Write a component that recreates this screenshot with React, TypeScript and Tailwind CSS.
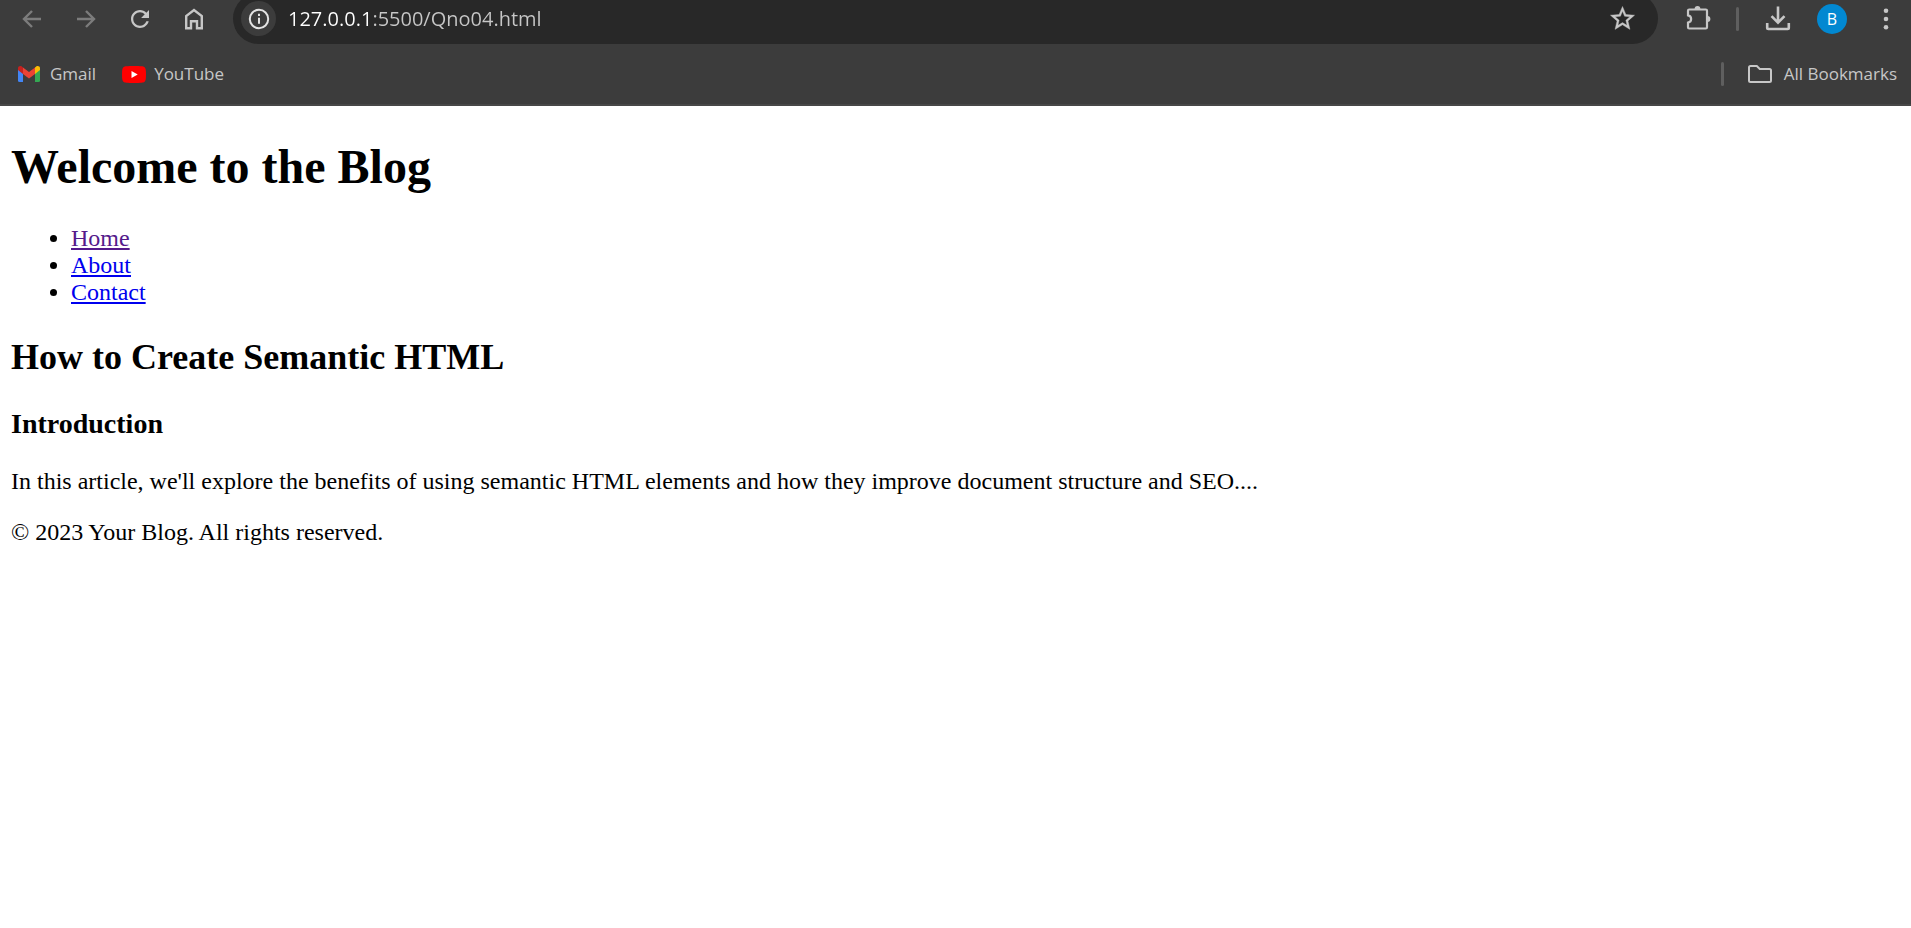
import type { ReactNode } from "react";

function ToolButton({ label, dim, children }: { label: string; dim?: boolean; children: ReactNode }) {
  return (
    <button
      type="button"
      aria-label={label}
      className={
        dim
          ? "flex h-full w-[54px] items-center justify-center text-[#7c7c7c]"
          : "flex h-full w-[54px] items-center justify-center text-[#c7c7c7]"
      }
    >
      <svg
        viewBox="0 0 30 30"
        className="size-[30px]"
        fill="none"
        stroke="currentColor"
        strokeWidth="2.4"
        aria-hidden="true"
      >
        {children}
      </svg>
    </button>
  );
}

function GmailIcon() {
  return (
    <svg viewBox="0 0 22 16" className="h-4 w-[22px]" aria-hidden="true">
      <path d="M0 3v11.5A1.5 1.5 0 0 0 1.500 16H5V6.500L0 3Z" fill="#4285f4" />
      <path d="M22 3v11.500a1.500 1.500 0 0 1-1.500 1.500H17V6.500L22 3Z" fill="#34a853" />
      <path d="M17 1.500v6.400l5-3.800V2.200C22 .2 19.700-.6 18.200.5L17 1.500Z" fill="#fbbc04" />
      <path d="M5 7.900V1.500l6 4.500 6-4.500v6.400l-6 4.500-6-4.500Z" fill="#ea4335" />
      <path d="M0 2.200v1.900l5 3.800V1.500L3.800.5C2.300-.6 0 .2 0 2.200Z" fill="#c5221f" />
    </svg>
  );
}

function YouTubeIcon() {
  return (
    <svg viewBox="0 0 24 17" className="h-[17px] w-6" aria-hidden="true">
      <path
        d="M12 0C5 0 2.800.300 1.700 1 .3 1.900 0 4.500 0 8.500s.3 6.600 1.700 7.500c1.100.7 3.300 1 10.300 1s9.200-.3 10.300-1C23.700 15.100 24 12.500 24 8.500S23.700 1.900 22.300 1C21.200.3 19 0 12 0Z"
        fill="#f00"
      />
      <path d="M9.500 5v7l6.200-3.500L9.500 5Z" fill="#fff" />
    </svg>
  );
}

function BrowserBar() {
  return (
    <header className="overflow-hidden border-b-2 border-[#474747] bg-[#3c3c3c] font-['Open_Sans','Noto_Sans',sans-serif] text-[#c7c7c7]">
      <div className="-mt-[7px] flex h-[51px] items-center pl-[5px]">
        <nav aria-label="Browser" className="flex h-full">
          <ToolButton label="Back" dim>
            <path d="M24 15H7.500M15 7l-8 8 8 8" />
          </ToolButton>
          <ToolButton label="Forward" dim>
            <path d="M6 15h16.500M15 7l8 8-8 8" />
          </ToolButton>
          <ToolButton label="Reload">
            <path
              transform="translate(1.500 1.500) scale(1.125)"
              fill="currentColor"
              stroke="none"
              d="M17.650 6.350C16.200 4.900 14.210 4 12 4c-4.420 0-7.990 3.580-7.990 8s3.570 8 7.990 8c3.730 0 6.840-2.550 7.730-6h-2.080c-.82 2.330-3.040 4-5.650 4-3.310 0-6-2.690-6-6s2.690-6 6-6c1.660 0 3.140.69 4.220 1.780L13 11h7V4l-2.350 2.350z"
            />
          </ToolButton>
          <ToolButton label="Home">
            <path d="M7.200 12V24.300h4.800v-7h6v7h4.800V12L15 6l-7.800 6Z" />
          </ToolButton>
        </nav>

        <div className="ml-3 flex h-full flex-1 items-center rounded-full bg-[#282828] pl-2">
          <button
            type="button"
            aria-label="View site information"
            className="flex size-[35px] items-center justify-center rounded-full bg-[#3c3c3c] text-[#e3e3e3]"
          >
            <svg viewBox="0 0 22 22" className="size-[22px]" fill="none" stroke="currentColor" aria-hidden="true">
              <circle cx="11" cy="11" r="9.200" strokeWidth="2" />
              <path d="M11 9.800v6M11 5.800v2.200" strokeWidth="2" />
            </svg>
          </button>
          <input
            type="text"
            aria-label="Address"
            defaultValue="127.0.0.1:5500/Qno04.html"
            className="ml-3 h-full min-w-0 flex-1 bg-[linear-gradient(90deg,#ffffff_84px,#c7c7c7_84px)] bg-clip-text text-[20px] text-transparent caret-white outline-none"
          />
          <button type="button" aria-label="Bookmark this tab" className="mr-[21px] flex size-[30px] items-center justify-center">
            <svg viewBox="0 0 24 24" className="size-[29px]" fill="currentColor" stroke="currentColor" strokeWidth="0.3" aria-hidden="true">
              <path d="M22 9.240l-7.190-.62L12 2 9.190 8.630 2 9.240l5.460 4.730L5.820 21 12 17.270 18.180 21l-1.630-7.030L22 9.240zM12 15.400l-3.760 2.270 1-4.280-3.320-2.880 4.380-.38L12 6.100l1.710 4.040 4.380.38-3.320 2.880 1 4.280L12 15.400z" />
            </svg>
          </button>
        </div>

        <div className="-mr-[2px] ml-[14px] flex h-full items-center">
          <ToolButton label="Extensions">
            <path
              d="M5.200 5.500H21.800Q23 5.500 23 6.700V23.300Q23 24.500 21.800 24.500H5.200Q4 24.500 4 23.300V18.600C8.200 17.800 8.200 12.200 4 11.400V6.700Q4 5.500 5.200 5.500Z"
              strokeWidth="2.2"
            />
            <path
              d="M10.600 5a2.900 2.900 0 0 1 5.800 0ZM23.500 12.100a2.900 2.900 0 0 1 0 5.800Z"
              fill="currentColor"
              stroke="none"
            />
          </ToolButton>
          <span className="ml-[10px] h-6 w-[3px] rounded-full bg-[#5f5f5f]" />
          <span className="ml-[12px] flex h-full">
            <ToolButton label="Downloads">
              <path d="M15 2.500v16M8.500 12.200l6.500 6.500 6.500-6.500" strokeWidth="2.600" />
              <path d="M4.200 19v4.800q0 1.200 1.200 1.200h19.200q1.200 0 1.200-1.200V19" strokeWidth="2.600" />
            </ToolButton>
          </span>
          <button type="button" aria-label="Profile" className="flex h-full w-[54px] items-center justify-center">
            <span className="flex size-[30px] items-center justify-center rounded-full bg-[#0288d1] text-[16px] text-white">
              B
            </span>
          </button>
          <ToolButton label="Menu">
            <g fill="currentColor" stroke="none">
              <circle cx="15" cy="6.700" r="2.300" />
              <circle cx="15" cy="15" r="2.300" />
              <circle cx="15" cy="23.300" r="2.300" />
            </g>
          </ToolButton>
        </div>
      </div>

      <nav aria-label="Bookmarks" className="flex h-[60px] items-center pr-[14px] pl-[18px] text-[17px]">
        <a href="#gmail" className="flex items-center gap-[10px]">
          <GmailIcon />
          Gmail
        </a>
        <a href="#youtube" className="ml-[26px] flex items-center gap-2">
          <YouTubeIcon />
          YouTube
        </a>
        <span className="ml-auto h-6 w-[3px] rounded-full bg-[#5f5f5f]" />
        <button type="button" className="ml-6 flex items-center gap-3">
          <svg viewBox="0 0 24 18" className="h-[18px] w-6" fill="none" stroke="currentColor" strokeWidth="2" aria-hidden="true">
            <path d="M2.500 1h6.300l3 3h9.700Q23 4 23 5.500v10q0 1.500-1.500 1.500h-19Q1 17 1 15.500v-13Q1 1 2.500 1Z" />
          </svg>
          All Bookmarks
        </button>
      </nav>
    </header>
  );
}

export default function App() {
  return (
    <div className="min-h-screen bg-white">
      <BrowserBar />
      <div className="px-[11px] pt-[33px] font-['Liberation_Serif',serif] text-2xl/[27px] text-black">
        <header>
          <h1 className="text-5xl/[55px] font-bold">Welcome to the Blog</h1>
          <nav aria-label="Site">
            <ul className="mt-[31px] list-disc pl-[60px]">
              <li>
                <a href="#home" className="text-[#551a8b] underline">
                  Home
                </a>
              </li>
              <li>
                <a href="#about" className="text-[#0000ee] underline">
                  About
                </a>
              </li>
              <li>
                <a href="#contact" className="text-[#0000ee] underline">
                  Contact
                </a>
              </li>
            </ul>
          </nav>
        </header>
        <main>
          <article>
            <h2 className="mt-[31px] text-4xl/[41px] font-bold">How to Create Semantic HTML</h2>
            <section>
              <h3 className="mt-[30px] text-[28px]/[32px] font-bold">Introduction</h3>
              <p className="mt-7">
                In this article, we'll explore the benefits of using semantic HTML elements and how they improve
                document structure and SEO....
              </p>
            </section>
          </article>
        </main>
        <footer>
          <p className="mt-6">© 2023 Your Blog. All rights reserved.</p>
        </footer>
      </div>
    </div>
  );
}
